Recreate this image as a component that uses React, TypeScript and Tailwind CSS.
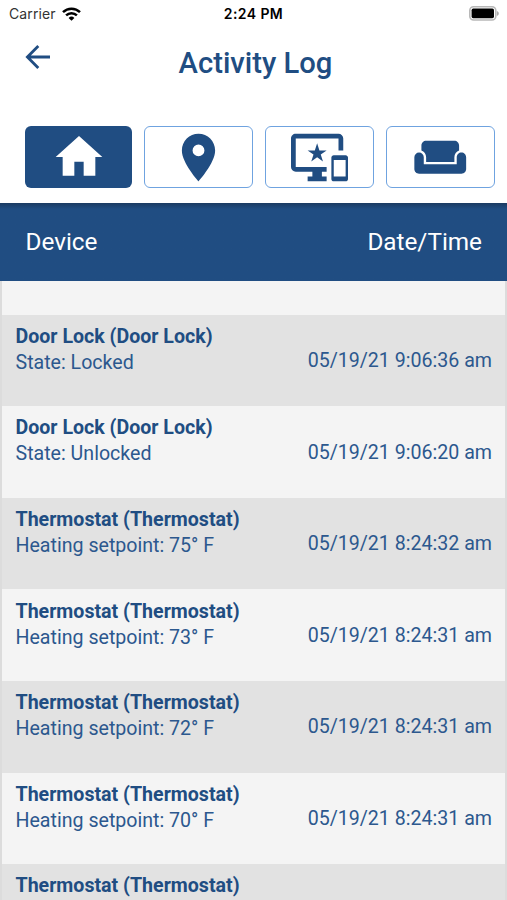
import { MdHome, MdImportantDevices, MdLocationOn, MdWeekend } from "react-icons/md";

const entries = [
  { name: "Door Lock (Door Lock)", detail: "State: Locked", time: "05/19/21 9:06:36 am" },
  { name: "Door Lock (Door Lock)", detail: "State: Unlocked", time: "05/19/21 9:06:20 am" },
  { name: "Thermostat (Thermostat)", detail: "Heating setpoint: 75° F", time: "05/19/21 8:24:32 am" },
  { name: "Thermostat (Thermostat)", detail: "Heating setpoint: 73° F", time: "05/19/21 8:24:31 am" },
  { name: "Thermostat (Thermostat)", detail: "Heating setpoint: 72° F", time: "05/19/21 8:24:31 am" },
  { name: "Thermostat (Thermostat)", detail: "Heating setpoint: 70° F", time: "05/19/21 8:24:31 am" },
  { name: "Thermostat (Thermostat)", detail: "", time: "" },
];

function StatusBar() {
  return (
    <div className="grid h-[27px] grid-cols-3 items-center pl-[8px] pr-[8px] font-['Inter',sans-serif] text-black">
      <div className="flex items-center gap-[6px] pl-px text-[14px] tracking-[0.1px] text-[#333]">
        <span>Carrier</span>
        <svg width="19" height="14" viewBox="0 0 19 14" fill="none" stroke="#000" strokeWidth="2.5">
          <path d="M1 5.2a12.2 12.2 0 0 1 17 0" />
          <path d="M4.1 8.4a7.7 7.7 0 0 1 10.8 0" />
          <path d="M9.5 13.8 6.6 10.9a4.1 4.1 0 0 1 5.8 0z" fill="#000" stroke="none" />
        </svg>
      </div>
      <span className="text-center text-[14px] font-semibold tracking-[0.4px]">2:24 PM</span>
      <svg className="justify-self-end" width="30" height="15" viewBox="0 0 30 15">
        <rect x="0.8" y="0.8" width="26" height="13.2" rx="3.8" fill="#fff" stroke="#b8b8b8" strokeWidth="1.6" />
        <rect x="2.6" y="2.6" width="22.4" height="9.6" rx="1.6" fill="#000" />
        <path d="M27.9 5v5c1.2-.4 1.9-1.4 1.9-2.5S29.1 5.4 27.9 5z" fill="#aaa" />
      </svg>
    </div>
  );
}

const outlined =
  "flex h-[62px] w-[109px] items-center justify-center rounded-md border-[1.5px] border-[#6fa3e0] bg-white text-[#204d82]";

export default function App() {
  return (
    <div className="flex h-[900px] w-[507px] flex-col overflow-hidden bg-white font-['Roboto',sans-serif] text-[#204d82]">
      <StatusBar />
      <header className="grid h-[99px] shrink-0 grid-cols-[60px_1fr_56px] items-start">
        <svg className="ml-[25px] mt-[17px]" width="26" height="26" viewBox="0 0 26 26" fill="none" stroke="currentColor" strokeWidth="2.8">
          <path d="M25 13H2.5M13.3 2 2.4 13l10.9 11" />
        </svg>
        <h1 className="mt-[16px] text-center text-[29.2px] font-medium leading-[40px]">Activity Log</h1>
      </header>
      <nav className="flex h-[77px] shrink-0 gap-3 pl-[25px]">
        <div className="flex h-[62px] w-[107px] items-center justify-center rounded-md bg-[#204d82] text-white">
          <MdHome size={56} />
        </div>
        <div className={outlined}><MdLocationOn size={57} /></div>
        <div className={outlined}><MdImportantDevices size={57} /></div>
        <div className={outlined}><MdWeekend size={56.5} /></div>
      </nav>
      <div className="flex h-[78px] shrink-0 items-center justify-between bg-[#204d82] bg-linear-to-b from-[#1b3b62] to-[#204d82] to-[6px] pl-[25.5px] pr-[25px] text-[24.3px] text-white">
        <span>Device</span>
        <span>Date/Time</span>
      </div>
      <main className="flex min-h-0 flex-1 flex-col border-x-2 border-[#dcdcdc] bg-[#f4f4f4]">
        <div className="h-[33.7px] shrink-0" />
        {entries.map((e, i) => (
          <div
            key={i}
            className="flex h-[91.6px] shrink-0 items-start justify-between pl-[13.5px] pr-[13px] text-[19.6px] odd:bg-[#f4f4f4] even:bg-[#e2e2e2]"
          >
            <div className="pt-[9.1px] leading-[26px]">
              <div className="font-bold">{e.name}</div>
              <div className="text-[#2c588e]">{e.detail}</div>
            </div>
            <div className="pt-[33.3px] leading-[26px] text-[#2c588e]">{e.time}</div>
          </div>
        ))}
      </main>
    </div>
  );
}
